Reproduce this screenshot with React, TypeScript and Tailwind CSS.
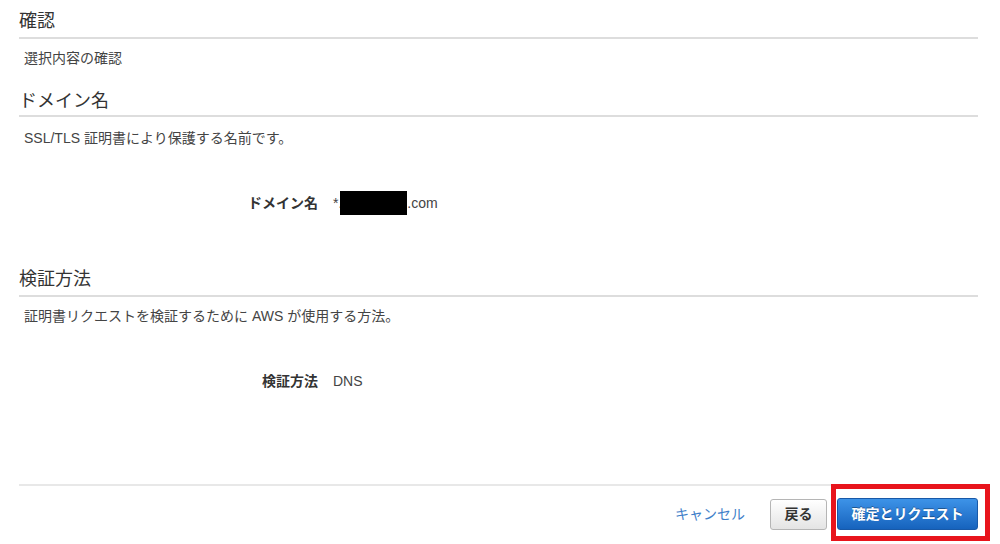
const font = { fontFamily: '"Liberation Sans", "Noto Sans CJK JP", sans-serif' };

const SectionTitle = ({ children, className = '' }: { children: React.ReactNode; className?: string }) => (
  <h2 className={`text-[18px] leading-[24px] text-[#333] border-b-2 border-[#dddddd] ${className}`}>{children}</h2>
);

const Desc = ({ children, className = '' }: { children: React.ReactNode; className?: string }) => (
  <p className={`pl-[5px] text-[14px] leading-[20px] text-[#444] ${className}`}>{children}</p>
);

const Row = ({ label, children, className = '' }: { label: string; children: React.ReactNode; className?: string }) => (
  <div className={`flex items-center text-[14px] leading-[20px] ${className}`}>
    <div className="w-[299px] text-right font-bold text-[#333]">{label}</div>
    <div className="pl-[15px] text-[#444] flex items-center">{children}</div>
  </div>
);

export default function App() {
  return (
    <div style={font} className="relative w-[1000px] h-[544px] bg-white overflow-hidden">
      <div className="pl-[19px] pr-[22px] pt-[9px]">
        <SectionTitle className="pb-[4px]">確認</SectionTitle>
        <Desc className="mt-[9px]">選択内容の確認</Desc>

        <SectionTitle className="mt-[21px] pb-[2px]">ドメイン名</SectionTitle>
        <Desc className="mt-[11px]">SSL/TLS 証明書により保護する名前です。</Desc>
        <Row label="ドメイン名" className="mt-[43px]">
          <span>*.</span>
          <span className="inline-block w-[67px] h-[24px] bg-black -ml-[2px]" />
          <span>.com</span>
        </Row>

        <SectionTitle className="mt-[52px] pb-[4px]">検証方法</SectionTitle>
        <Desc className="mt-[9px]">証明書リクエストを検証するために AWS が使用する方法。</Desc>
        <Row label="検証方法" className="mt-[45px]">
          <span>DNS</span>
        </Row>

        <div className="mt-[93px] border-t-2 border-[#e8e8e8]" />
        <div className="mt-[12px] flex items-center justify-end">
          <a className="text-[14px] text-[#3f7fc9] mr-[25px] cursor-pointer">キャンセル</a>
          <button className="w-[57px] h-[31px] rounded-[3px] border border-[#b5b5b5] bg-gradient-to-b from-white to-[#e4e4e4] text-[14px] font-bold text-[#333]">
            戻る
          </button>
          <button className="ml-[10px] w-[141px] h-[32px] rounded-[3px] border border-[#1859a8] bg-gradient-to-b from-[#3d93e8] to-[#1663bd] text-[14px] font-bold text-white [text-shadow:0_-1px_0_rgba(0,0,0,0.35)]">
            確定とリクエスト
          </button>
        </div>
      </div>

      <div className="absolute left-[831px] top-[484px] w-[159px] h-[57px] border-[5px] border-[#e8141c]" />
    </div>
  );
}
